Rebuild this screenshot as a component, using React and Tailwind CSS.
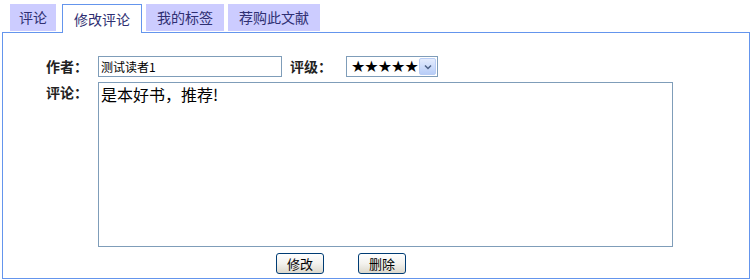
import React from "react";

const tabs = [
  { label: "评论", w: "w-[46px]", ml: "ml-0" },
  { label: "修改评论", w: "w-[80px]", ml: "ml-[6px]", active: true },
  { label: "我的标签", w: "w-[78px]", ml: "ml-[4px]" },
  { label: "荐购此文献", w: "w-[92px]", ml: "ml-[4px]" },
];

const font = "font-['Noto_Sans_CJK_SC','Liberation_Sans',sans-serif]";

const Tab = ({ label, w, ml, active }) =>
  active ? (
    <div
      className={`${w} ${ml} h-[29px] relative z-10 bg-white border border-b-0 border-[#6495ed] flex items-center justify-center text-[14px] text-[#2f2f72]`}
    >
      {label}
    </div>
  ) : (
    <div
      className={`${w} ${ml} h-[27px] bg-[#ccccff] flex items-center justify-center text-[14px] text-[#2f2f72]`}
    >
      {label}
    </div>
  );

const XpButton = ({ children, className = "" }) => (
  <button
    className={`h-[21px] w-[48px] rounded-[3px] border border-[#003c74] bg-gradient-to-b from-white via-[#f3f2ee] to-[#dcd8cc] text-[13px] leading-none text-black ${className}`}
  >
    {children}
  </button>
);

export default function App() {
  return (
    <div className={`w-[751px] h-[280px] bg-white ${font}`}>
      <div className="flex items-start pt-[4px] pl-[10px] h-[32px]">
        {tabs.map((t) => (
          <Tab key={t.label} {...t} />
        ))}
      </div>

      <div className="ml-[2px] w-[748px] h-[247px] border border-[#6495ed] pt-[23px] pl-[43px]">
        <div className="flex items-center h-[21px]">
          <span className="w-[52px] text-[14px] font-bold text-[#222]">作者：</span>
          <div className="w-[184px] h-[21px] border border-[#7f9db9] px-[2px] flex items-center text-[12px] text-black">
            测试读者1
          </div>
          <span className="ml-[8px] w-[56px] text-[14px] font-bold text-[#222]">评级：</span>
          <div className="w-[92px] h-[21px] border border-[#7f9db9] flex items-center justify-between pl-[4px] pr-[1px]">
            <span className="font-['DejaVu_Sans',sans-serif] text-[16px] leading-none text-black tracking-[-1px]">
              ★★★★★
            </span>
            <span className="w-[17px] h-[17px] rounded-[2px] border border-[#b9cdf5] bg-gradient-to-b from-[#e4ecfd] to-[#b8cdf7] flex items-center justify-center">
              <svg width="8" height="6" viewBox="0 0 8 6">
                <path d="M1 1.5 L4 4.5 L7 1.5" fill="none" stroke="#4d6185" strokeWidth="1.5" />
              </svg>
            </span>
          </div>
        </div>

        <div className="flex items-start mt-[5px]">
          <span className="w-[52px] text-[14px] font-bold text-[#222] leading-[20px]">评论：</span>
          <div className="w-[575px] h-[165px] border border-[#7f9db9] px-[2px] pt-[1px] text-[16px] leading-[20px] text-black">
            是本好书，推荐!
          </div>
        </div>

        <div className="flex mt-[6px] ml-[230px]">
          <XpButton>修改</XpButton>
          <XpButton className="ml-[34px]">删除</XpButton>
        </div>
      </div>
    </div>
  );
}
